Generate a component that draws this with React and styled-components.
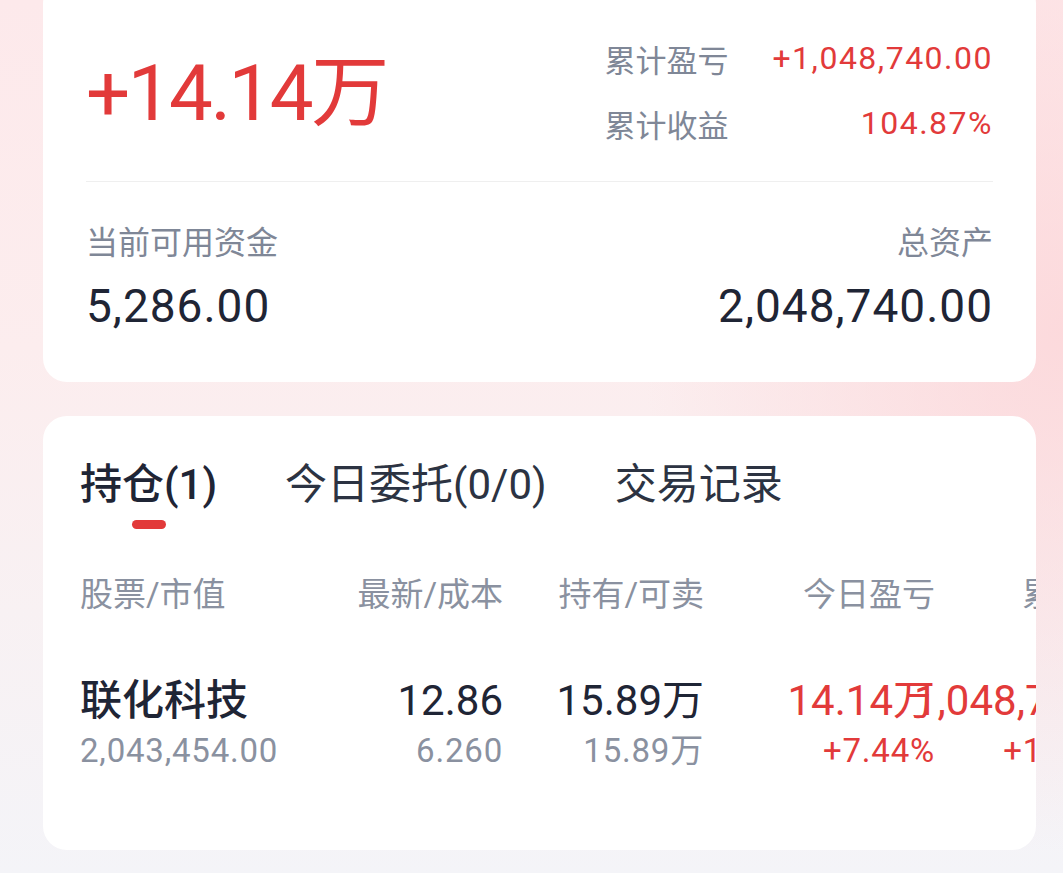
import React from "react";
import styled, { createGlobalStyle } from "styled-components";

const RED = "#e23a3a";
const DARK = "#1f2535";
const GRAY = "#7f8797";

const GlobalStyle = createGlobalStyle`
  html, body {
    margin: 0;
    padding: 0;
  }
  body {
    min-height: 100vh;
    overflow: hidden;
    font-family: Roboto, "Noto Sans CJK SC", "Noto Sans", sans-serif;
    background:
      radial-gradient(ellipse 420px 520px at 100% 38%, rgba(252, 214, 217, 0.85), rgba(252, 214, 217, 0) 100%),
      linear-gradient(180deg, #fde9eb 0%, #fcedee 40%, #f8f1f3 70%, #f4f4f8 100%);
  }
`;

const Page = styled.div`
  min-height: 873px;
  padding: 0 27px 0 43px;
  box-sizing: border-box;
`;

const Card = styled.section`
  background: #ffffff;
  border-radius: 24px;
  box-sizing: border-box;
`;

const SummaryCard = styled(Card)`
  margin-top: -20px;
  padding: 0 43px 48px;
`;

const Top = styled.div`
  height: 202px;
  box-sizing: border-box;
  padding-top: 20px;
  display: flex;
  align-items: center;
  justify-content: space-between;
  border-bottom: 1px solid #efefef;
`;

const BigAmount = styled.div`
  font-size: 78px;
  letter-spacing: -2.5px;
  line-height: 1;
  color: ${RED};
  padding-top: 6px;
`;

const Stats = styled.div`
  display: grid;
  grid-template-columns: auto auto;
  column-gap: 44px;
  grid-auto-rows: 65px;
  align-items: center;
`;

const StatLabel = styled.span`
  font-size: 31px;
  color: ${GRAY};
`;

const StatValue = styled.span`
  justify-self: end;
  font-size: 32px;
  letter-spacing: 1.5px;
  color: ${RED};
`;

const Balances = styled.div`
  display: grid;
  grid-template-columns: 1fr 1fr;
  padding-top: 41px;
`;

const Balance = styled.div`
  display: flex;
  flex-direction: column;
  align-items: ${(p) => (p.$right ? "flex-end" : "flex-start")};
  gap: 15px;
`;

const BalanceLabel = styled.span`
  font-size: 32px;
  line-height: 40px;
  color: ${GRAY};
`;

const BalanceValue = styled.span`
  font-size: 46px;
  line-height: 56px;
  letter-spacing: 1px;
  color: ${DARK};
`;

const HoldingsCard = styled(Card)`
  margin-top: 34px;
  padding: 44px 0 79px 37px;
  overflow: hidden;
`;

const Tabs = styled.div`
  display: flex;
  gap: 68px;
`;

const Tab = styled.div`
  display: flex;
  flex-direction: column;
  align-items: center;
  font-size: 42px;
  line-height: 50px;
  font-weight: ${(p) => (p.$active ? 500 : 400)};
  color: ${(p) => (p.$active ? DARK : "#2c3342")};
`;

const Indicator = styled.span`
  width: 34px;
  height: 9px;
  margin-top: 10px;
  border-radius: 5px;
  background: ${(p) => (p.$active ? RED : "transparent")};
`;

const Table = styled.div`
  width: max-content;
  display: grid;
  grid-template-columns: 220px 203px 201px 231px 219px;
`;

const HeadCell = styled.div`
  margin-top: 46px;
  font-size: 33px;
  line-height: 40px;
  color: #8a91a0;
  white-space: nowrap;
  display: flex;
  justify-content: ${(p) => (p.$left ? "flex-start" : "flex-end")};
`;

const Cell = styled.div`
  margin-top: 60px;
  display: flex;
  flex-direction: column;
  align-items: ${(p) => (p.$left ? "flex-start" : "flex-end")};
  gap: 4px;
  white-space: nowrap;
`;

const Main = styled.span`
  font-size: 42px;
  line-height: 52px;
  font-weight: ${(p) => (p.$name ? 500 : 400)};
  color: ${(p) => (p.$red ? RED : DARK)};
`;

const Sub = styled.span`
  font-size: 33px;
  line-height: 40px;
  letter-spacing: 0.8px;
  color: ${(p) => (p.$red ? RED : "#8a91a0")};
`;

const tabs = [
  { label: "持仓(1)", active: true },
  { label: "今日委托(0/0)" },
  { label: "交易记录" },
];

const headers = ["股票/市值", "最新/成本", "持有/可卖", "今日盈亏", "累计盈亏"];

const row = [
  { main: "联化科技", sub: "2,043,454.00", left: true, name: true },
  { main: "12.86", sub: "6.260" },
  { main: "15.89万", sub: "15.89万" },
  { main: "14.14万", sub: "+7.44%", red: true },
  { main: "1,048,740.00", sub: "+104.87%", red: true },
];

export default function App() {
  return (
    <>
      <GlobalStyle />
      <Page>
        <SummaryCard>
          <Top>
            <BigAmount>+14.14万</BigAmount>
            <Stats>
              <StatLabel>累计盈亏</StatLabel>
              <StatValue>+1,048,740.00</StatValue>
              <StatLabel>累计收益</StatLabel>
              <StatValue>104.87%</StatValue>
            </Stats>
          </Top>
          <Balances>
            <Balance>
              <BalanceLabel>当前可用资金</BalanceLabel>
              <BalanceValue>5,286.00</BalanceValue>
            </Balance>
            <Balance $right>
              <BalanceLabel>总资产</BalanceLabel>
              <BalanceValue>2,048,740.00</BalanceValue>
            </Balance>
          </Balances>
        </SummaryCard>

        <HoldingsCard>
          <Tabs>
            {tabs.map((t) => (
              <Tab key={t.label} $active={t.active}>
                {t.label}
                <Indicator $active={t.active} />
              </Tab>
            ))}
          </Tabs>
          <Table>
            {headers.map((h, i) => (
              <HeadCell key={h} $left={i === 0}>
                {h}
              </HeadCell>
            ))}
            {row.map((c, i) => (
              <Cell key={i} $left={c.left}>
                <Main $red={c.red} $name={c.name}>
                  {c.main}
                </Main>
                <Sub $red={c.red}>{c.sub}</Sub>
              </Cell>
            ))}
          </Table>
        </HoldingsCard>
      </Page>
    </>
  );
}
